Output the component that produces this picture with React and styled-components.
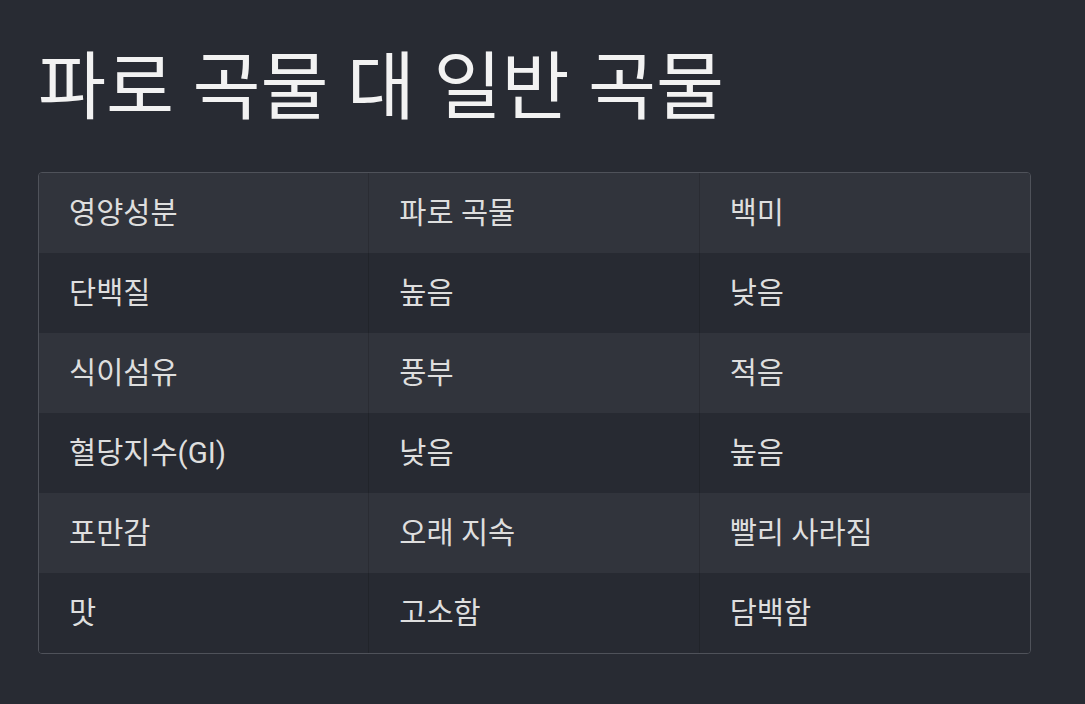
import React from "react";
import styled, { createGlobalStyle } from "styled-components";

const GlobalStyle = createGlobalStyle`
  body {
    margin: 0;
    background-color: #282b33;
    font-family: Roboto, "Noto Sans CJK KR", sans-serif;
  }
`;

const Page = styled.div`
  padding: 32px 54px 40px 38px;
`;

const Title = styled.h1`
  margin: 0 0 29px 0;
  font-size: 74px;
  font-weight: 400;
  line-height: 1.5;
  color: #f2f2f2;
`;

const Table = styled.table`
  width: 100%;
  border-collapse: separate;
  border-spacing: 0;
  border: 1px solid #4f525a;
  border-radius: 4px;
  overflow: hidden;
`;

const Row = styled.tr`
  background-color: ${({ $odd }) => ($odd ? "#31343c" : "#272a32")};
`;

const Cell = styled.td`
  width: 33.33%;
  padding: 20px 30px;
  font-size: 29.5px;
  line-height: 40px;
  color: #dedede;
  border-right: 1px solid rgba(0, 0, 0, 0.14);

  &:last-child {
    border-right: none;
  }
`;

const rows = [
  ["영양성분", "파로 곡물", "백미"],
  ["단백질", "높음", "낮음"],
  ["식이섬유", "풍부", "적음"],
  ["혈당지수(GI)", "낮음", "높음"],
  ["포만감", "오래 지속", "빨리 사라짐"],
  ["맛", "고소함", "담백함"],
];

const App = () => {
  return (
    <Page>
      <GlobalStyle />
      <Title>파로 곡물 대 일반 곡물</Title>
      <Table>
        <tbody>
          {rows.map((row, i) => (
            <Row key={i} $odd={i % 2 === 0}>
              {row.map((text, j) => (
                <Cell key={j}>{text}</Cell>
              ))}
            </Row>
          ))}
        </tbody>
      </Table>
    </Page>
  );
};

export default App;
